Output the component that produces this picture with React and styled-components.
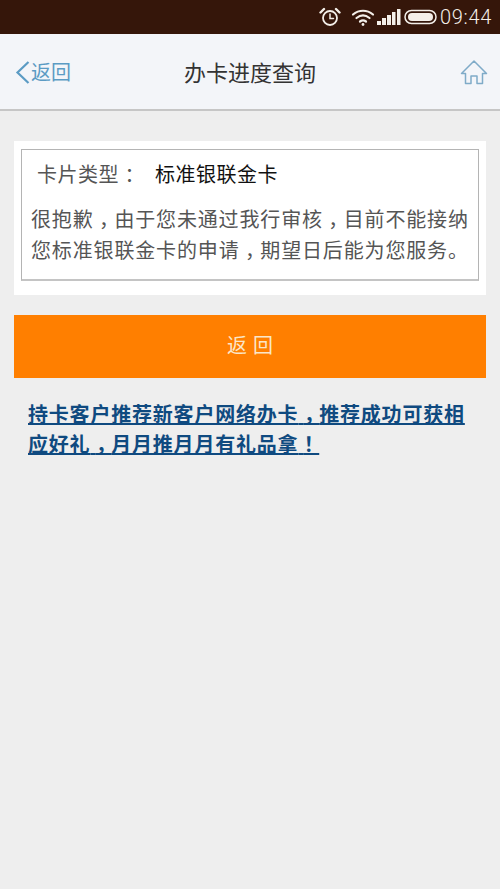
import React from 'react';
import styled, {createGlobalStyle} from 'styled-components';

const GlobalStyle = createGlobalStyle`
  html, body {
    margin: 0;
    padding: 0;
    background: #eeeeee;
  }
  * {
    box-sizing: border-box;
  }
`;

const FONT = `"Noto Sans CJK SC", "Noto Sans", sans-serif`;

const Page = styled.div`
  width: 500px;
  height: 889px;
  background: #eeeeee;
  font-family: ${FONT};
  overflow: hidden;
`;

const StatusBar = styled.div`
  height: 34px;
  background: #35160a;
  display: flex;
  align-items: center;
  justify-content: flex-end;
  padding-right: 8px;
  color: #f4efe9;
`;

const StatusIcon = styled.span`
  display: flex;
  margin-right: ${props => props.$gap}px;
`;

const Clock = styled.span`
  font-family: "Roboto", sans-serif;
  font-size: 20px;
  font-weight: 300;
  letter-spacing: 0.7px;
`;

const NavBar = styled.div`
  height: 77px;
  background: #f3f5f9;
  border-bottom: 2px solid #c6c6c6;
  display: flex;
  align-items: center;
  justify-content: space-between;
  padding: 0 12px 0 15px;
  position: relative;
`;

const BackLink = styled.div`
  display: flex;
  align-items: center;
  color: #5b9bc4;
  font-size: 20px;
  line-height: 28px;
`;

const Title = styled.div`
  position: absolute;
  left: 0;
  right: 0;
  top: 21px;
  text-align: center;
  font-size: 22px;
  line-height: 32px;
  color: #333;
  pointer-events: none;
`;

const Content = styled.div`
  padding: 30px 14px 0;
`;

const Card = styled.div`
  background: #fff;
  padding: 8px 7px 14px;
`;

const CardInner = styled.div`
  border: 1px solid #b4b4b4;
  border-bottom: 2px solid #c4c4c4;
  height: 132px;
  padding: 9px 9px 0;
`;

const TypeRow = styled.div`
  display: flex;
  font-size: 20px;
  line-height: 30px;
  padding-left: 6px;
  letter-spacing: 0.5px;
`;

const TypeLabel = styled.span`
  width: 118px;
  color: #555;
`;

const TypeValue = styled.span`
  color: #111;
`;

const Message = styled.p`
  margin: 14px 0 0;
  font-size: 20px;
  line-height: 31px;
  letter-spacing: 0.85px;
  color: #555;
  white-space: nowrap;
`;

// full-width punctuation sits mid-cell in the screenshot, an en space pushes it over
const Punct = styled.span`
  letter-spacing: -4.6px;
`;

const ActionButton = styled.button`
  display: block;
  width: 100%;
  height: 63px;
  margin-top: 20px;
  padding: 0 0 4px 6px;
  border: none;
  background: #ff7f00;
  color: #fbe6c8;
  font-family: ${FONT};
  font-size: 20px;
  letter-spacing: 6px;
`;

const PromoLink = styled.a`
  display: block;
  margin: 21px 28px 0;
  font-size: 20px;
  font-weight: 700;
  line-height: 30px;
  letter-spacing: 0.8px;
  color: #0f4a80;
  text-decoration: underline;
  white-space: nowrap;
`;

const AlarmIcon = () => (
  <svg width="22" height="20" viewBox="0 0 22 20" fill="none" stroke="#f4efe9" strokeWidth="1.8" strokeLinecap="round">
    <circle cx="11" cy="11" r="7" />
    <path d="M11 7v4.5h3.5" strokeWidth="1.5" />
    <path d="M1.5 5.5 5 2M20.5 5.5 17 2" strokeWidth="2.4" />
  </svg>
);

const WifiIcon = () => (
  <svg width="24" height="20" viewBox="0 0 24 20" fill="none" stroke="#f4efe9" strokeWidth="2.2" strokeLinecap="round">
    <path d="M2 7.5C8 2.5 16 2.5 22 7.5" />
    <path d="M5.5 11C9.5 7.8 14.5 7.8 18.5 11" />
    <path d="M9 14.5c2-1.5 4-1.5 6 0" />
    <circle cx="12" cy="17.5" r="1.4" fill="#f4efe9" stroke="none" />
  </svg>
);

const SignalIcon = () => (
  <svg width="24" height="18" viewBox="0 0 24 18" fill="#f4efe9">
    <rect x="0" y="13" width="4" height="4" />
    <rect x="5" y="10" width="4" height="7" />
    <rect x="10" y="7" width="4" height="10" />
    <rect x="15" y="4" width="3.5" height="13" />
    <rect x="20" y="1" width="3.5" height="16" />
  </svg>
);

const BatteryIcon = () => (
  <svg width="33" height="16" viewBox="0 0 33 16" fill="none">
    <rect x="1" y="1.5" width="31" height="13" rx="6.5" stroke="#f4efe9" strokeWidth="1.5" />
    <rect x="4" y="4" width="25" height="8" rx="4" fill="#f4efe9" />
  </svg>
);

const BackIcon = () => (
  <svg width="16" height="24" viewBox="0 0 16 24" fill="none" stroke="#5b9bc4" strokeWidth="2.2">
    <path d="M13.5 2 2.5 12.5 13.5 23" />
  </svg>
);

const HomeIcon = () => (
  <svg width="28" height="26" viewBox="0 0 28 26" fill="none" stroke="#7fabc8" strokeWidth="1.5" strokeLinejoin="round">
    <path d="M1.5 14.5 14 2l12.5 12.5h-4V24.5h-5.5V17h-6v7.500H5.500V14.500Z" />
  </svg>
);

const App = () => (
  <Page>
    <GlobalStyle />
    <StatusBar>
      <StatusIcon $gap={10}><AlarmIcon /></StatusIcon>
      <StatusIcon $gap={2}><WifiIcon /></StatusIcon>
      <StatusIcon $gap={3}><SignalIcon /></StatusIcon>
      <StatusIcon $gap={3}><BatteryIcon /></StatusIcon>
      <Clock>09:44</Clock>
    </StatusBar>
    <NavBar>
      <BackLink>
        <BackIcon />
        返回
      </BackLink>
      <Title>办卡进度查询</Title>
      <HomeIcon />
    </NavBar>
    <Content>
      <Card>
        <CardInner>
          <TypeRow>
            <TypeLabel>卡片类型<Punct>{'\u2002'}：</Punct></TypeLabel>
            <TypeValue>标准银联金卡</TypeValue>
          </TypeRow>
          <Message>
            很抱歉<Punct>{'\u2002'}，</Punct>由于您未通过我行审核<Punct>{'\u2002'}，</Punct>目前不能接纳
            <br />
            您标准银联金卡的申请<Punct>{'\u2002'}，</Punct>期望日后能为您服务。
          </Message>
        </CardInner>
      </Card>
      <ActionButton>返回</ActionButton>
    </Content>
    <PromoLink href="#">
      持卡客户推荐新客户网络办卡<Punct>{'\u2002'}，</Punct>推荐成功可获相
      <br />
      应好礼<Punct>{'\u2002'}，</Punct>月月推月月有礼品拿<Punct>{'\u2002'}！</Punct>
    </PromoLink>
  </Page>
);

export default App;
